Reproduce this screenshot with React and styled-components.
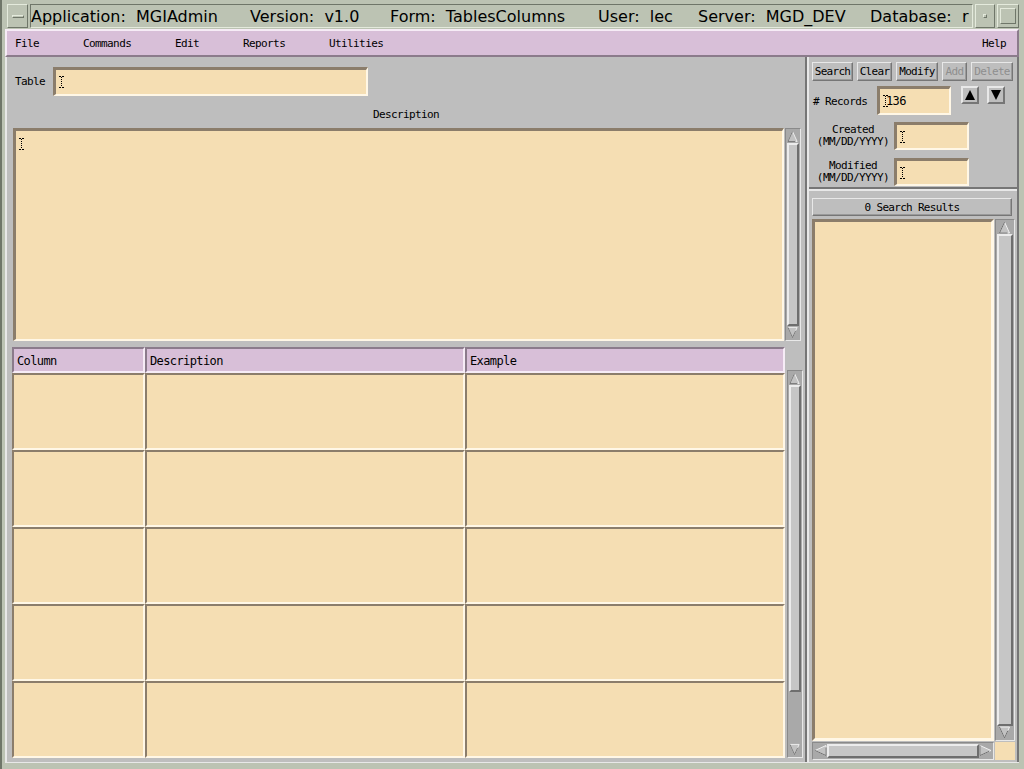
import React from "react";
import styled, { createGlobalStyle, css } from "styled-components";

const GRAY = "#bebebe";
const GRAY_LIGHT = "#e8e8e8";
const GRAY_DARK = "#767676";
const WHEAT = "#f5deb3";
const WHEAT_DARK = "#8b7d6b";
const WHEAT_LIGHT = "#fff7e6";
const THISTLE = "#d8bfd8";
const THISTLE_DARK = "#8b7b8b";
const THISTLE_LIGHT = "#f6ecf6";
const FRAME = "#bcc3b3";

const bevel = (tl, br, w = 2) => css`
  border-style: solid;
  border-width: ${w}px;
  border-color: ${tl} ${br} ${br} ${tl};
`;

const GlobalStyle = createGlobalStyle`
  html, body { margin: 0; padding: 0; background: ${FRAME}; }
  * { box-sizing: border-box; }
`;

const Frame = styled.div`
  width: 1024px;
  height: 769px;
  overflow: hidden;
  background: ${FRAME};
  padding: 4px 5px 6px 3px;
  display: flex;
  flex-direction: column;
  font-family: "DejaVu Sans Mono", "Liberation Mono", monospace;
  font-size: 11px;
  letter-spacing: -0.6px;
  color: #000;
  border-left: 2px solid #6f7669;
`;

const TitleBar = styled.div`
  height: 24px;
  display: flex;
  gap: 2px;
  padding-left: 2px;
  margin-bottom: 1px;
`;

const WmButton = styled.div`
  width: ${(p) => p.$w}px;
  ${bevel("#e4eadc", "#6f7669", 1)}
  display: flex;
  align-items: center;
  justify-content: center;
`;

const WmBar = styled.div`
  width: 12px;
  height: 3px;
  ${bevel("#e4eadc", "#6f7669", 1)}
`;

const WmDot = styled.div`
  width: 4px;
  height: 4px;
  ${bevel("#e4eadc", "#6f7669", 1)}
`;

const WmSquare = styled.div`
  width: 16px;
  height: 16px;
  ${bevel("#e4eadc", "#6f7669", 1)}
`;

const TitleText = styled.div`
  flex: 1;
  ${bevel("#6f7669", "#e4eadc", 1)}
  display: flex;
  align-items: center;
  overflow: hidden;
  white-space: nowrap;
  font-family: "DejaVu Sans", "Liberation Sans", sans-serif;
  font-size: 16px;
  letter-spacing: 0;
`;

const TitleItem = styled.span`
  flex: 0 0 ${(p) => p.$w}px;
  white-space: pre;
`;

const MenuBar = styled.div`
  height: 28px;
  background: ${THISTLE};
  ${bevel(THISTLE_LIGHT, THISTLE_DARK, 2)}
  display: flex;
  align-items: center;
  padding: 0 11px 0 8px;
`;

const MenuItem = styled.span`
  width: ${(p) => (p.$w ? `${p.$w}px` : "auto")};
  margin-left: ${(p) => (p.$right ? "auto" : "0")};
`;

const Main = styled.div`
  flex: 1;
  display: flex;
  background: ${GRAY};
  border-bottom: 1px solid ${GRAY_LIGHT};
`;

const LeftPanel = styled.div`
  width: 802px;
  display: flex;
  flex-direction: column;
  border-left: 2px solid ${GRAY_LIGHT};
  border-right: 2px solid ${GRAY_DARK};
`;

const RightPanel = styled.div`
  flex: 1;
  display: flex;
  flex-direction: column;
  border-left: 2px solid ${GRAY_LIGHT};
  border-right: 2px solid ${GRAY_DARK};
`;

const FieldRow = styled.div`
  display: flex;
  align-items: center;
  margin-top: ${(p) => p.$top || 0}px;
  padding-left: ${(p) => p.$left || 0}px;
`;

const Label = styled.span`
  width: ${(p) => p.$w}px;
  text-align: ${(p) => p.$align || "left"};
  line-height: 12px;
  padding-top: ${(p) => p.$pt || 0}px;
`;

const Field = styled.div`
  width: ${(p) => p.$w}px;
  height: ${(p) => p.$h}px;
  background: ${WHEAT};
  border-style: solid;
  border-width: 3px 2px 2px 3px;
  border-color: ${WHEAT_DARK} ${WHEAT_LIGHT} ${WHEAT_LIGHT} ${WHEAT_DARK};
  display: flex;
  align-items: ${(p) => (p.$multi ? "flex-start" : "center")};
  padding: ${(p) => (p.$multi ? "7px 3px" : "0 3px")};
  font-size: 12px;
`;

const Caret = styled.svg`
  width: 5px;
  height: 12px;
  flex: none;
  margin-right: -2px;
`;

const IBeam = () => (
  <Caret viewBox="0 0 5 12">
    <path d="M0 0.5h2M3 0.5h2M0 11.5h2M3 11.5h2" stroke="#000" strokeWidth="1" />
    <path d="M2.5 1v10" stroke="#000" strokeWidth="1" strokeDasharray="1 1" />
  </Caret>
);

const CenterLabel = styled.div`
  height: 32px;
  padding-top: 12px;
  text-align: center;
`;

const DescRow = styled.div`
  display: flex;
  gap: 1px;
  padding-left: 6px;
  height: 213px;
`;

const TableWrap = styled.div`
  display: flex;
  gap: 2px;
  padding-left: 5px;
  margin-top: 6px;
`;

const Grid = styled.div`
  width: 773px;
  display: grid;
  grid-template-columns: 133px 320px 320px;
  grid-template-rows: 26px repeat(5, 77px);
`;

const HeadCell = styled.div`
  background: ${THISTLE};
  ${bevel(THISTLE_DARK, THISTLE_LIGHT, 2)}
  display: flex;
  align-items: center;
  padding: 2px 0 0 3px;
  font-size: 12px;
`;

const Cell = styled.div`
  background: ${WHEAT};
  ${bevel(WHEAT_DARK, WHEAT_LIGHT, 2)}
`;

const Track = styled.div`
  width: ${(p) => p.$w}px;
  height: ${(p) => p.$h}px;
  margin-top: ${(p) => p.$top || 0}px;
  flex: none;
  background: #a9a9a9;
  ${bevel("#8a8a8a", GRAY_LIGHT, 1)}
  display: flex;
  flex-direction: ${(p) => (p.$horizontal ? "row" : "column")};
  padding: 1px;
`;

const Thumb = styled.div`
  flex: ${(p) => p.$fill};
  background: #c6c6c6;
  ${bevel("#ececec", "#6e6e6e", 2)}
`;

const Space = styled.div`
  flex: ${(p) => p.$fill};
`;

const ArrowBox = styled.svg`
  flex: none;
  width: ${(p) => (p.$horizontal ? "13px" : "100%")};
  height: ${(p) => (p.$horizontal ? "100%" : "13px")};
  display: block;
`;

const arrowPoints = {
  up: "6,1 11,12 1,12",
  down: "1,1 11,1 6,12",
  left: "1,6 12,1 12,11",
  right: "1,1 12,6 1,11",
};

const Arrow = ({ dir }) => {
  const horizontal = dir === "left" || dir === "right";
  return (
    <ArrowBox $horizontal={horizontal} viewBox="0 0 13 13" preserveAspectRatio="xMidYMid meet">
      <polygon points={arrowPoints[dir]} fill="#c2c2c2" stroke="#f0f0f0" strokeWidth="1" />
      <polygon points={arrowPoints[dir]} fill="none" stroke="#6e6e6e" strokeWidth="1" strokeDasharray="0 14 30" />
    </ArrowBox>
  );
};

const ScrollBar = ({ w, h, top, horizontal, thumb = 1, rest = 0 }) => (
  <Track $w={w} $h={h} $top={top} $horizontal={horizontal}>
    <Arrow dir={horizontal ? "left" : "up"} />
    <Thumb $fill={thumb} />
    {rest > 0 && <Space $fill={rest} />}
    <Arrow dir={horizontal ? "right" : "down"} />
  </Track>
);

const TopSection = styled.div`
  height: 132px;
  padding: 5px 0 0 3px;
  border-bottom: 2px solid ${GRAY_DARK};
`;

const ButtonRow = styled.div`
  display: flex;
  gap: 4px;
`;

const Button = styled.div`
  width: ${(p) => p.$w}px;
  height: ${(p) => p.$h || 19}px;
  background: ${GRAY};
  ${bevel(GRAY_LIGHT, GRAY_DARK, 1)}
  box-shadow: inset -1px -1px 0 #9a9a9a;
  display: flex;
  align-items: center;
  justify-content: center;
  font-size: 11px;
  letter-spacing: -0.7px;
  color: ${(p) => (p.$disabled ? "#8e8e8e" : "#000")};
  white-space: nowrap;
`;

const ArrowButton = styled.div`
  width: 18px;
  height: 18px;
  margin-left: ${(p) => p.$ml}px;
  align-self: flex-start;
  background: ${GRAY};
  ${bevel(GRAY_LIGHT, GRAY_DARK, 2)}
  display: flex;
  align-items: center;
  justify-content: center;
`;

const BottomSection = styled.div`
  flex: 1;
  border-top: 2px solid ${GRAY_LIGHT};
  padding: 7px 0 0 3px;
  display: flex;
  flex-direction: column;
`;

const ListFrame = styled.div`
  margin-top: 3px;
  display: grid;
  grid-template-columns: 182px 20px;
  grid-template-rows: 522px 18px;
  column-gap: 1px;
  row-gap: 1px;
  background: ${GRAY};
  width: 203px;
`;

const ListBox = styled.div`
  background: ${WHEAT};
  ${bevel(WHEAT_DARK, WHEAT_LIGHT, 3)}
`;

const Corner = styled.div`
  background: ${WHEAT};
`;

const Tri = ({ up }) => (
  <svg width="12" height="12" viewBox="0 0 12 12">
    <polygon points={up ? "6,1 11,11 1,11" : "1,1 11,1 6,11"} fill="#000" />
  </svg>
);

export default function App() {
  const rows = [0, 1, 2, 3, 4];
  return (
    <>
      <GlobalStyle />
      <Frame>
        <TitleBar>
          <WmButton $w={21}>
            <WmBar />
          </WmButton>
          <TitleText>
            <TitleItem $w={219}>{"Application:  MGIAdmin"}</TitleItem>
            <TitleItem $w={140}>{"Version:  v1.0"}</TitleItem>
            <TitleItem $w={208}>{"Form:  TablesColumns"}</TitleItem>
            <TitleItem $w={100}>{"User:  lec"}</TitleItem>
            <TitleItem $w={172}>{"Server:  MGD_DEV"}</TitleItem>
            <TitleItem $w={100}>{"Database:  r"}</TitleItem>
          </TitleText>
          <WmButton $w={20}>
            <WmDot />
          </WmButton>
          <WmButton $w={22}>
            <WmSquare />
          </WmButton>
        </TitleBar>

        <MenuBar>
          <MenuItem $w={68}>File</MenuItem>
          <MenuItem $w={92}>Commands</MenuItem>
          <MenuItem $w={68}>Edit</MenuItem>
          <MenuItem $w={86}>Reports</MenuItem>
          <MenuItem>Utilities</MenuItem>
          <MenuItem $right>Help</MenuItem>
        </MenuBar>

        <Main>
          <LeftPanel>
            <FieldRow $top={10} $left={8}>
              <Label $w={38}>Table</Label>
              <Field $w={315} $h={29}>
                <IBeam />
              </Field>
            </FieldRow>
            <CenterLabel>Description</CenterLabel>
            <DescRow>
              <Field $w={771} $h={213} $multi>
                <IBeam />
              </Field>
              <ScrollBar w={16} h={213} />
            </DescRow>
            <TableWrap>
              <Grid>
                <HeadCell>Column</HeadCell>
                <HeadCell>Description</HeadCell>
                <HeadCell>Example</HeadCell>
                {rows.map((r) => (
                  <React.Fragment key={r}>
                    <Cell />
                    <Cell />
                    <Cell />
                  </React.Fragment>
                ))}
              </Grid>
              <ScrollBar w={16} h={388} top={23} thumb={6} rest={1} />
            </TableWrap>
          </LeftPanel>

          <RightPanel>
            <TopSection>
              <ButtonRow>
                <Button $w={41}>Search</Button>
                <Button $w={35}>Clear</Button>
                <Button $w={42}>Modify</Button>
                <Button $w={25} $disabled>Add</Button>
                <Button $w={42} $disabled>Delete</Button>
              </ButtonRow>
              <FieldRow $top={5} $left={1}>
                <Label $w={64} $pt={2}># Records</Label>
                <Field $w={74} $h={29}>
                  <IBeam />
                  136
                </Field>
                <ArrowButton $ml={10}>
                  <Tri up />
                </ArrowButton>
                <ArrowButton $ml={8}>
                  <Tri />
                </ArrowButton>
              </FieldRow>
              <FieldRow $top={7}>
                <Label $w={82} $align="center">
                  Created
                  <br />
                  (MM/DD/YYYY)
                </Label>
                <Field $w={75} $h={28}>
                  <IBeam />
                </Field>
              </FieldRow>
              <FieldRow $top={8}>
                <Label $w={82} $align="center">
                  Modified
                  <br />
                  (MM/DD/YYYY)
                </Label>
                <Field $w={75} $h={28}>
                  <IBeam />
                </Field>
              </FieldRow>
            </TopSection>
            <BottomSection>
              <Button $w={200} $h={18}>0 Search Results</Button>
              <ListFrame>
                <ListBox />
                <ScrollBar w={20} h={522} />
                <ScrollBar w={182} h={18} horizontal />
                <Corner />
              </ListFrame>
            </BottomSection>
          </RightPanel>
        </Main>
      </Frame>
    </>
  );
}
